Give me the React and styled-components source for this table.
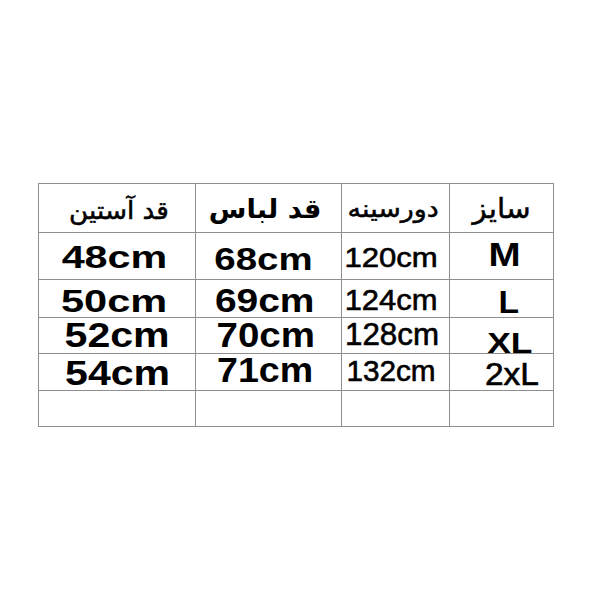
import React from "react";
import styled, { createGlobalStyle } from "styled-components";

const GlobalStyle = createGlobalStyle`
  html, body {
    margin: 0;
    padding: 0;
    background: #ffffff;
  }
`;

const Page = styled.div`
  width: 600px;
  height: 600px;
  padding: 183px 0 0 38px;
  box-sizing: border-box;
  background: #ffffff;
`;

const Table = styled.div`
  display: grid;
  direction: rtl;
  grid-template-columns: 103px 107px 145px 156px;
  grid-template-rows: 48px 46px 37px 35px 36px 35px;
  gap: 1px;
  padding: 1px;
  width: fit-content;
  background: #8e8e8e;
`;

const Cell = styled.div`
  background: #ffffff;
  display: flex;
  align-items: center;
  justify-content: center;
  overflow: visible;
`;

const Head = styled.span`
  display: inline-block;
  font-family: "DejaVu Sans", sans-serif;
  font-size: ${(p) => p.$size}px;
  font-weight: ${(p) => p.$weight};
  -webkit-text-stroke: ${(p) => p.$stroke}px #000;
  color: #000;
  line-height: 1;
  white-space: nowrap;
  transform: translate(${(p) => p.$dx}px, ${(p) => p.$dy}px)
    scaleX(${(p) => p.$sx});
`;

const Value = styled.span`
  display: inline-block;
  direction: ltr;
  font-family: "Liberation Sans", Arial, sans-serif;
  font-size: ${(p) => p.$size}px;
  font-weight: ${(p) => (p.$bold ? 700 : 400)};
  -webkit-text-stroke: ${(p) => (p.$bold ? "0" : "0.6px")} #000;
  color: #000;
  line-height: 1;
  white-space: nowrap;
  transform: translate(${(p) => p.$dx}px, ${(p) => p.$dy}px)
    scaleX(${(p) => p.$sx});
`;

// header cells, from right to left
const heads = [
  { t: "سایز", size: 28, weight: 400, stroke: 0.5, sx: 1.05, dx: 0, dy: 1 },
  { t: "دورسینه", size: 24, weight: 400, stroke: 0.5, sx: 1.12, dx: -2.5, dy: 1 },
  { t: "قد لباس", size: 26, weight: 700, stroke: 0, sx: 1.05, dx: -3.5, dy: 1 },
  { t: "قد آستین", size: 25, weight: 400, stroke: 0.5, sx: 1.05, dx: 2.5, dy: 2 },
];

// body rows, right to left: size, chest, length, sleeve
const rows = [
  [
    { t: "M", size: 33.5, sx: 1.15, dx: 2.5, dy: -1, bold: true },
    { t: "120cm", size: 28, sx: 1.11, dx: -4, dy: 2 },
    { t: "68cm", size: 32, sx: 1.2, dx: -5.5, dy: 2.5, bold: true },
    { t: "48cm", size: 32, sx: 1.29, dx: -2.5, dy: 0.5, bold: true },
  ],
  [
    { t: "L", size: 32, sx: 1.05, dx: 7, dy: 3, bold: true },
    { t: "124cm", size: 30, sx: 1.03, dx: -4, dy: 0.5 },
    { t: "69cm", size: 33, sx: 1.18, dx: -3.5, dy: 1.5, bold: true },
    { t: "50cm", size: 31, sx: 1.34, dx: -2.5, dy: 2.5, bold: true },
  ],
  [
    { t: "XL", size: 29.5, sx: 1.2, dx: 8, dy: 7, bold: true },
    { t: "128cm", size: 31, sx: 1.01, dx: -3.5, dy: -1 },
    { t: "70cm", size: 35, sx: 1.1, dx: -3, dy: -1.5, bold: true },
    { t: "52cm", size: 34.5, sx: 1.19, dx: 0, dy: 0, bold: true },
  ],
  [
    { t: "2xL", size: 31, sx: 1.08, dx: 10, dy: 2 },
    { t: "132cm", size: 30, sx: 0.99, dx: -4, dy: -1 },
    { t: "71cm", size: 34.5, sx: 1.09, dx: -3, dy: -2.5, bold: true },
    { t: "54cm", size: 34.5, sx: 1.19, dx: 0.5, dy: 0.5, bold: true },
  ],
];

function App() {
  return (
    <Page>
      <GlobalStyle />
      <Table>
        {heads.map((h) => (
          <Cell key={h.t}>
            <Head
              $size={h.size}
              $weight={h.weight}
              $stroke={h.stroke}
              $sx={h.sx}
              $dx={h.dx}
              $dy={h.dy}
            >
              {h.t}
            </Head>
          </Cell>
        ))}
        {rows.map((row, i) =>
          row.map((c) => (
            <Cell key={i + c.t}>
              <Value
                $size={c.size}
                $sx={c.sx}
                $dx={c.dx}
                $dy={c.dy}
                $bold={c.bold}
              >
                {c.t}
              </Value>
            </Cell>
          ))
        )}
        {[0, 1, 2, 3].map((k) => (
          <Cell key={"empty" + k} />
        ))}
      </Table>
    </Page>
  );
}

export default App;
